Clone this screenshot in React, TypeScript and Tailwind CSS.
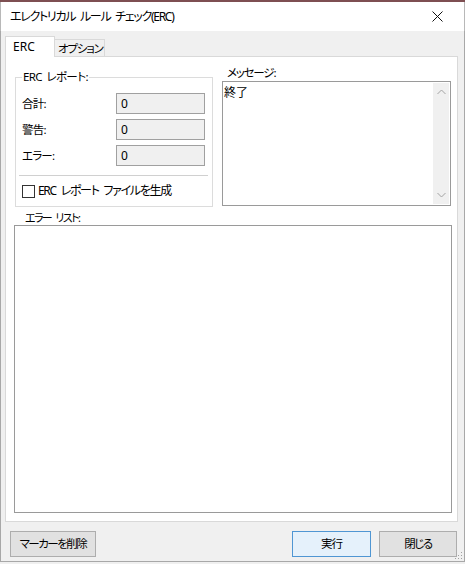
import React from 'react'

const font = "font-['Noto_Sans','Noto_Sans_CJK_JP',sans-serif] [font-feature-settings:'palt']"

const CountRow = ({ label, value }: { label: string; value: string }) => (
  <div className="flex items-center h-[21px]">
    <span className="w-[94px] text-[11.5px] leading-[16px] tracking-[-0.8px]">{label}</span>
    <div className="w-[89px] h-[21px] bg-[#f0f0f0] border border-[#a0a0a0] flex items-center pl-[4px] text-[12px]">
      {value}
    </div>
  </div>
)

const Button = ({ label, primary }: { label: string; primary?: boolean }) => (
  <button
    className={
      primary
        ? 'h-[26px] w-[79px] bg-[#e5f1fb] border border-[#4f96d3] text-[11.5px] tracking-[-1px] text-black'
        : 'h-[26px] w-[78px] bg-[#e1e1e1] border border-[#adadad] text-[11.5px] tracking-[-1.5px] text-black'
    }
  >
    {label}
  </button>
)

const App: React.FC = () => {
  return (
    <div className={`w-[465px] h-[564px] flex flex-col bg-[#f0f0f0] text-black overflow-hidden ${font}`}>
      {/* window behind */}
      <div className="h-[2px] bg-[#7e4f52]" />

      {/* title bar */}
      <div className="h-[29px] bg-white flex items-center justify-between pl-[9px] pr-[21px] border-l border-r border-[#b8b8b8]">
        <span className="text-[12px] leading-[16px] tracking-[-1.3px] [word-spacing:3px]">エレクトリカル ルール チェック(ERC)</span>
        <svg width="11" height="11" viewBox="0 0 11 11">
          <path d="M0.5 0.5 L10.5 10.5 M10.5 0.5 L0.5 10.5" stroke="#111" strokeWidth="1" />
        </svg>
      </div>

      {/* body */}
      <div className="relative flex-1 flex flex-col pl-[4px] pt-[5px] border-l border-r border-b border-[#a8a8a8] mb-[2px]">
        {/* tabs */}
        <div className="flex items-end h-[21px] -mb-[1px] relative z-10">
          <div className="w-[50px] h-[21px] bg-white border-t border-l border-r border-[#d9d9d9] pl-[7px] text-[12px] leading-[19px]">
            ERC
          </div>
          <div className="w-[50px] h-[18px] bg-[#f0f0f0] border-t border-r border-b border-[#d9d9d9] pl-[3px] text-[11.5px] leading-[17px] tracking-[-1.2px] whitespace-nowrap">
            オプション
          </div>
        </div>

        {/* tab panel */}
        <div className="w-[453px] h-[466px] bg-white border border-[#d9d9d9] flex flex-col">
          <div className="flex items-start">
            <fieldset className="ml-[9px] mt-[12px] w-[198px] h-[138px] border border-[#dcdcdc] px-[6px]">
              <legend className="px-[1px] text-[11.5px] leading-[16px] tracking-[-0.6px] [word-spacing:2px]">ERC レポート:</legend>
              <div className="flex flex-col gap-[5px] pt-[8px]">
                <CountRow label="合計:" value="0" />
                <CountRow label="警告:" value="0" />
                <CountRow label="エラー:" value="0" />
              </div>
              <div className="h-px bg-[#d0d0d0] mt-[9px] -ml-[3px] -mr-[2px]" />
              <label className="flex items-center mt-[7px] gap-[3px]">
                <span className="w-[13px] h-[13px] border border-[#333] bg-white" />
                <span className="text-[12px] leading-[16px] tracking-[-1.3px] [word-spacing:3px] whitespace-nowrap">ERC レポート ファイルを生成</span>
              </label>
            </fieldset>

            <div className="ml-[9px] mt-[8px] flex flex-col">
              <span className="pl-[5px] text-[11.5px] leading-[16px] h-[16px] tracking-[-1.2px]">メッセージ:</span>
              <div className="w-[229px] h-[125px] border border-[#9a9a9a] flex">
                <div className="flex-1 pl-[1px] pt-[3px] text-[12px] leading-[16px]">終了</div>
                <div className="w-[16px] my-[1px] mr-[1px] bg-[#f0f0f0] flex flex-col justify-between items-center py-[6px]">
                  <svg width="9" height="6" viewBox="0 0 9 6">
                    <path d="M0.5 5 L4.5 1 L8.5 5" fill="none" stroke="#a3a3a3" strokeWidth="1" />
                  </svg>
                  <svg width="9" height="6" viewBox="0 0 9 6">
                    <path d="M0.5 1 L4.5 5 L8.5 1" fill="none" stroke="#a3a3a3" strokeWidth="1" />
                  </svg>
                </div>
              </div>
            </div>
          </div>

          <span className="ml-[19px] mt-[3px] text-[11px] leading-[15px] h-[15px] tracking-[-1.6px] [word-spacing:3px]">エラー リスト:</span>
          <div className="ml-[8px] w-[438px] h-[288px] border border-[#9a9a9a] bg-white" />
        </div>

        {/* buttons */}
        <div className="flex items-center mt-[9px] pl-[5px] pr-[7px]">
          <button className="h-[26px] w-[86px] bg-[#e1e1e1] border border-[#adadad] text-[11.5px] tracking-[-1.5px] text-black">
            マーカーを削除
          </button>
          <div className="flex-1" />
          <Button label="実行" primary />
          <div className="w-[8px]" />
          <Button label="閉じる" />
        </div>

        {/* size grip */}
        <svg className="absolute right-[1px] bottom-[1px]" width="8" height="8" viewBox="0 0 8 8">
          <rect x="6" y="0" width="1" height="1" fill="#a0a0a0" />
          <rect x="3" y="3" width="1" height="1" fill="#a0a0a0" />
          <rect x="6" y="3" width="1" height="1" fill="#a0a0a0" />
          <rect x="0" y="6" width="1" height="1" fill="#a0a0a0" />
          <rect x="3" y="6" width="1" height="1" fill="#a0a0a0" />
          <rect x="6" y="6" width="1" height="1" fill="#a0a0a0" />
        </svg>
      </div>
    </div>
  )
}

export default App
